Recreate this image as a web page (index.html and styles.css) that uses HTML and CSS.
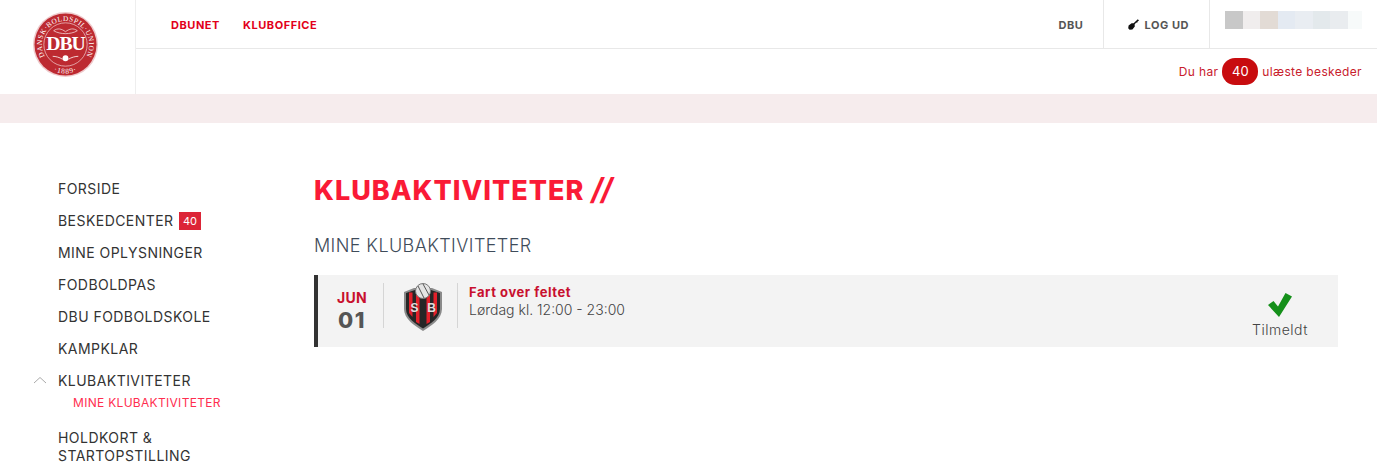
FILE: index.html
```html
<!DOCTYPE html>
<html lang="da">
<head>
    <meta charset="UTF-8">
    <title>Klubaktiviteter</title>
    <link rel="stylesheet" href="styles.css">
</head>
<body>
    <header class="header">
        <a class="logo-cell" href="#">
            <svg class="logo" viewBox="0 0 66 66" width="66" height="66">
                <defs>
                    <path id="arcTop" d="M13 46.400A24 24 0 1 1 53 46.400"/>
                    <path id="arcBottom" d="M12.100 53.900A29.500 29.500 0 0 0 53.900 53.900"/>
                </defs>
                <circle cx="33" cy="33" r="33" fill="#eec9cb"/>
                <circle cx="33" cy="33" r="31.500" fill="#bd2a31"/>
                <circle cx="33" cy="33" r="22" fill="none" stroke="#f3d5d6" stroke-width=".7"/>
                <text class="logo-ring"><textPath href="#arcTop" startOffset="50%" text-anchor="middle">DANSK·BOLDSPIL·UNION</textPath></text>
                <text class="logo-year"><textPath href="#arcBottom" startOffset="50%" text-anchor="middle">·1889·</textPath></text>
                <text class="logo-dbu" x="33" y="39" text-anchor="middle">DBU</text>
                <path d="M21 19c4-3 8-2 12 1 4-3 8-4 12-1-3 2-8 3-12 3s-9-1-12-3z" fill="none" stroke="#f3d5d6" stroke-width=".8"/>
                <circle cx="33" cy="47" r="3" fill="#fff"/>
                <path d="M20 45c3 0 7 1 10 3M46 45c-3 0-7 1-10 3" fill="none" stroke="#f3d5d6" stroke-width="1"/>
            </svg>
        </a>
        <div class="header-main">
            <div class="top-row">
                <nav class="top-nav">
                    <a href="#">DBUNET</a>
                    <a href="#">KLUBOFFICE</a>
                </nav>
                <a class="top-cell" href="#">DBU</a>
                <a class="top-cell logout" href="#">
                    <svg viewBox="0 0 11 11" width="11" height="11"><path d="M9.800.3 11 1.600 9.600 2.400 9.400 3.600 8 3.800 6.600 5.400 6.800 7.400 4.400 10.400 1.600 10.800.2 9.200.6 6.600 3.600 4.200 5.600 4.300z" fill="#111"/></svg>
                    LOG UD
                </a>
                <div class="user-cell">
                    <div class="user-blur">
                        <span class="b1"></span><span class="b2"></span><span class="b3"></span><span class="b4"></span>
                        <span class="b5"></span><span class="b6"></span><span class="b7"></span><span class="b8"></span>
                    </div>
                </div>
            </div>
            <div class="msg-row">
                Du har <span class="msg-count">40</span> ulæste beskeder
            </div>
        </div>
    </header>
    <div class="band"></div>

    <div class="page">
        <ul class="side-nav">
            <li><a href="#">FORSIDE</a></li>
            <li><a href="#">BESKEDCENTER</a> <span class="side-badge">40</span></li>
            <li><a href="#">MINE OPLYSNINGER</a></li>
            <li><a href="#">FODBOLDPAS</a></li>
            <li><a href="#">DBU FODBOLDSKOLE</a></li>
            <li><a href="#">KAMPKLAR</a></li>
            <li class="open">
                <svg class="caret" viewBox="0 0 14 8" width="14" height="8"><path d="M1 7 7 1.500 13 7" fill="none" stroke="#aaa" stroke-width="1"/></svg>
                <a href="#">KLUBAKTIVITETER</a>
                <a class="sub-link" href="#">MINE KLUBAKTIVITETER</a>
            </li>
            <li class="wrap"><a href="#">HOLDKORT &amp; STARTOPSTILLING</a></li>
        </ul>

        <main class="content">
            <h1>KLUBAKTIVITETER <span class="slashes">//</span></h1>
            <h2>MINE KLUBAKTIVITETER</h2>

            <div class="activity">
                <div class="date">
                    <span class="month">JUN</span>
                    <span class="day">01</span>
                </div>
                <div class="crest">
                    <svg viewBox="0 0 40 48" width="40" height="48">
                        <path d="M1 9 11 5H29L39 9V26C39 36 28 43 20 48 12 43 1 36 1 26z" fill="#8a8a8a"/>
                        <path d="M3 10 12 7H28L37 10V26C37 35 27 41 20 45.500 13 41 3 35 3 26z" fill="#262626"/>
                        <path d="M6 9.500h3.500V34L6 30zM13 7.500h3.500V41L13 39zM23.500 7.500H27V39L23.500 41zM30.500 9.500H34V30L30.500 34z" fill="#e3202a"/>
                        <circle cx="20" cy="8" r="7.500" fill="#e4e4e4" stroke="#777"/>
                        <path d="M15 3 21 15M20 1 26 12" stroke="#555" fill="none"/>
                        <text class="crest-text" x="11.500" y="29" text-anchor="middle">S</text>
                        <text class="crest-text" x="28.500" y="29" text-anchor="middle">B</text>
                    </svg>
                </div>
                <div class="info">
                    <a class="title" href="#">Fart over feltet</a>
                    <span class="time">Lørdag kl. 12:00 - 23:00</span>
                </div>
                <div class="status">
                    <svg viewBox="0 0 24 24" width="24" height="24"><path d="M0 12 5.500 8 10 13.500 17.500 0 24 3.500 11 24z" fill="#15901a"/></svg>
                    <span>Tilmeldt</span>
                </div>
            </div>
        </main>
    </div>
</body>
</html>
```

FILE: styles.css
```css
* {
    box-sizing: border-box;
}
html, body {
    height: 100%;
}
body {
    margin: 0;
    font-family: "Inter", "Liberation Sans", sans-serif;
    color: #333;
    background: #fff;
    overflow: hidden;
}
a {
    color: inherit;
    text-decoration: none;
}

/* Header */
.header {
    display: flex;
    height: 94px;
}
.logo-cell {
    width: 136px;
    border-right: 1px solid #eee;
    padding: 12px 0 0 33px;
}
.logo {
    display: block;
    width: 65px;
    height: 65px;
}
.logo-ring {
    font-family: "Liberation Serif", serif;
    font-size: 7.400px;
    letter-spacing: .5px;
    fill: #fff;
}
.logo-year {
    font-family: "Liberation Serif", serif;
    font-size: 7.500px;
    letter-spacing: .8px;
    fill: #fff;
}
.logo-dbu {
    font-family: "Liberation Serif", serif;
    font-size: 20px;
    font-weight: bold;
    letter-spacing: -1px;
    fill: #fff;
}
.header-main {
    flex: 1;
    display: flex;
    flex-direction: column;
}
.top-row {
    display: flex;
    height: 49px;
    padding-top: 1px;
    border-bottom: 1px solid #e8e8e8;
    font-size: 11px;
    font-weight: 700;
    letter-spacing: .55px;
}
.top-nav {
    flex: 1;
    display: flex;
    align-items: center;
    gap: 23px;
    padding-left: 35px;
    color: #e2001a;
}
.top-cell {
    display: flex;
    align-items: center;
    gap: 5px;
    margin-top: -1px;
    padding: 1px 20px 0 0;
    color: #555;
    border-right: 1px solid #e8e8e8;
}
.logout {
    padding: 1px 20px 0 24px;
}
.user-cell {
    width: 167px;
    padding: 10px 14px 0 15px;
}
.user-blur {
    display: flex;
    height: 18px;
}
.user-blur span {
    width: 17.500px;
}
.user-blur .b1 { background: #c8c8c8; }
.user-blur .b2 { background: #f0eded; }
.user-blur .b3 { background: #e2dbd5; }
.user-blur .b4 { background: #e4eaf2; }
.user-blur .b5 { background: #e9edf2; }
.user-blur .b6 { background: #e3e9ec; }
.user-blur .b7 { background: #e9ecef; }
.user-blur .b8 { background: #f7fafa; width: 14px; }
.msg-row {
    flex: 1;
    display: flex;
    align-items: center;
    justify-content: flex-end;
    gap: 4px;
    padding-right: 15px;
    font-size: 12px;
    letter-spacing: .35px;
    color: #c8202c;
}
.msg-count {
    width: 36px;
    height: 27px;
    line-height: 27px;
    border-radius: 13px;
    text-align: center;
    font-size: 13px;
    letter-spacing: 0;
    color: #fff;
    background: #c80c0f;
}
.band {
    height: 29px;
    background: #f6eced;
}

/* Page */
.page {
    display: flex;
    padding-top: 50px;
}
.side-nav {
    width: 314px;
    margin: 0;
    padding: 7px 60px 0 58px;
    list-style: none;
    font-size: 14px;
    line-height: 18px;
    letter-spacing: .45px;
    color: #333;
}
.side-nav li {
    position: relative;
    margin-bottom: 14px;
}
.side-badge {
    display: inline-block;
    margin-left: 1px;
    padding: 0 4px;
    line-height: 18px;
    font-size: 11px;
    letter-spacing: 0;
    vertical-align: top;
    color: #fff;
    background: #dc2537;
}
.side-nav .open {
    margin-bottom: 17px;
}
.caret {
    position: absolute;
    left: -25px;
    top: 4px;
}
.sub-link {
    display: block;
    margin: 4px 0 0 15px;
    font-size: 12px;
    letter-spacing: .3px;
    color: #ff2e4f;
}
.content {
    flex: 1;
    padding-right: 39px;
}
h1 {
    margin: 0;
    font-size: 27px;
    line-height: 36px;
    font-weight: 800;
    letter-spacing: 1px;
    color: #fa1a36;
}
.slashes {
    font-size: 30px;
    line-height: 30px;
    font-weight: 700;
    font-style: italic;
    letter-spacing: -2px;
}
h2 {
    margin: 25px 0 0;
    font-size: 18px;
    line-height: 24px;
    font-weight: 300;
    letter-spacing: .4px;
    color: #3f4c5a;
}
.activity {
    display: flex;
    align-items: flex-start;
    height: 72px;
    margin-top: 17px;
    padding-top: 8px;
    border-left: 4px solid #333;
    background: #f3f3f3;
}
.date {
    display: flex;
    flex-direction: column;
    align-items: center;
    width: 66px;
    height: 45px;
    padding-left: 3px;
    border-right: 1px solid #d5d5d5;
}
.month {
    margin-top: 7px;
    font-size: 14px;
    font-weight: 700;
    line-height: 16px;
    letter-spacing: .3px;
    color: #c8102e;
}
.day {
    margin-top: 1px;
    font-size: 22px;
    font-weight: 800;
    line-height: 26px;
    letter-spacing: 1.500px;
    color: #555;
}
.crest {
    width: 74px;
    height: 45px;
    padding-left: 19px;
    border-right: 1px solid #d5d5d5;
}
.crest svg {
    display: block;
}
.crest-text {
    font-family: "Liberation Sans", sans-serif;
    font-size: 12px;
    font-weight: bold;
    fill: #ddd;
}
.info {
    flex: 1;
    display: flex;
    flex-direction: column;
    padding-left: 11px;
}
.title {
    font-size: 13px;
    font-weight: 700;
    line-height: 18px;
    letter-spacing: .55px;
    color: #c8102e;
}
.time {
    font-size: 14px;
    font-weight: 300;
    line-height: 18px;
    color: #444;
}
.status {
    display: flex;
    flex-direction: column;
    align-items: center;
    width: 116px;
    padding-top: 10px;
    font-size: 14px;
    font-weight: 300;
    line-height: 18px;
    letter-spacing: .5px;
    color: #444;
}
.status svg {
    margin-bottom: 4px;
}
```
